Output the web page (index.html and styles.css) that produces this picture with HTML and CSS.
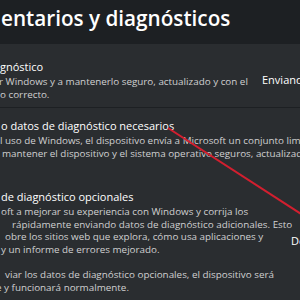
FILE: index.html
```html
<!DOCTYPE html>
<html lang="es">
<head>
<meta charset="utf-8">
<link rel="stylesheet" href="styles.css">
</head>
<body>
<div class="page">
  <h1 class="heading">entarios y diagnósticos</h1>
  <section class="card c1">
    <div class="text">
      <div class="ttl">gnóstico</div>
      <div class="desc">
        <div class="ln o1">r Windows y a mantenerlo seguro, actualizado y con el</div>
        <div class="ln">o correcto.</div>
      </div>
    </div>
    <div class="side">Enviando datos</div>
  </section>
  <section class="card c2">
    <div class="text">
      <div class="ttl o2">o datos de diagnóstico necesarios</div>
      <div class="desc">
        <div class="ln">l uso de Windows, el dispositivo envía a Microsoft un conjunto limitado</div>
        <div class="ln o3">mantener el dispositivo y el sistema operativo seguros, actualizados y</div>
      </div>
    </div>
  </section>
  <section class="card c3">
    <div class="text">
      <div class="ttl o2">de diagnóstico opcionales</div>
      <div class="desc">
        <div class="ln o2">oft a mejorar su experiencia con Windows y corrija los</div>
        <div class="ln o4">rápidamente enviando datos de diagnóstico adicionales. Esto</div>
        <div class="ln o5">obre los sitios web que explora, cómo usa aplicaciones y</div>
        <div class="ln o2">y un informe de errores mejorado.</div>
      </div>
      <div class="desc para">
        <div class="ln o5">viar los datos de diagnóstico opcionales, el dispositivo será</div>
        <div class="ln o6">e y funcionará normalmente.</div>
      </div>
    </div>
    <div class="side">Desactivado</div>
  </section>
  <svg class="arrow" width="300" height="300" viewBox="0 0 300 300" aria-hidden="true">
    <line x1="168" y1="128" x2="312" y2="221" stroke="#d21f2f" stroke-width="2"/>
  </svg>
</div>
</body>
</html>
```
FILE: styles.css
```css
html, body {
  margin: 0;
  padding: 0;
  background: #1d2023;
}
.page {
  position: relative;
  width: 300px;
  height: 300px;
  overflow: hidden;
  background: #1d2023;
  font-family: "Open Sans", "Noto Sans", sans-serif;
  color: #ffffff;
}
.heading {
  margin: 0;
  height: 44px;
  box-sizing: border-box;
  padding: 3px 0 0 1px;
  font-size: 20.7px;
  line-height: 30px;
  font-weight: 600;
  white-space: nowrap;
  color: #ffffff;
}
.card {
  display: flex;
  align-items: center;
  background: #2a2d30;
}
.c1 {
  padding: 15px 0 7px 0;
  border-bottom: 1px solid #1d2023;
}
.c2 {
  padding: 10px 0 20px 0;
}
.c3 {
  padding: 9px 0 10px 0;
}
.text {
  flex: 0 0 262px;
  min-width: 0;
}
.c2 .text {
  flex: 0 0 300px;
}
.c3 .text {
  flex: 0 0 291px;
}
.ttl {
  font-size: 11px;
  line-height: 16px;
  white-space: nowrap;
  color: #ffffff;
}
.desc {
  font-size: 9.85px;
  line-height: 12.7px;
  color: #d0d0d0;
}
.para {
  margin-top: 12.5px;
}
.ln {
  white-space: nowrap;
}
.side {
  flex: 0 0 auto;
  font-size: 11px;
  line-height: 14px;
  white-space: nowrap;
  color: #ffffff;
}
.o1 { margin-left: -1px; }
.o2 { margin-left: 1px; }
.o3 { margin-left: 2px; }
.o4 { margin-left: 12px; }
.o5 { margin-left: 5px; }
.o6 { margin-left: -4px; }
.arrow {
  position: absolute;
  left: 0;
  top: 0;
  pointer-events: none;
}
```
